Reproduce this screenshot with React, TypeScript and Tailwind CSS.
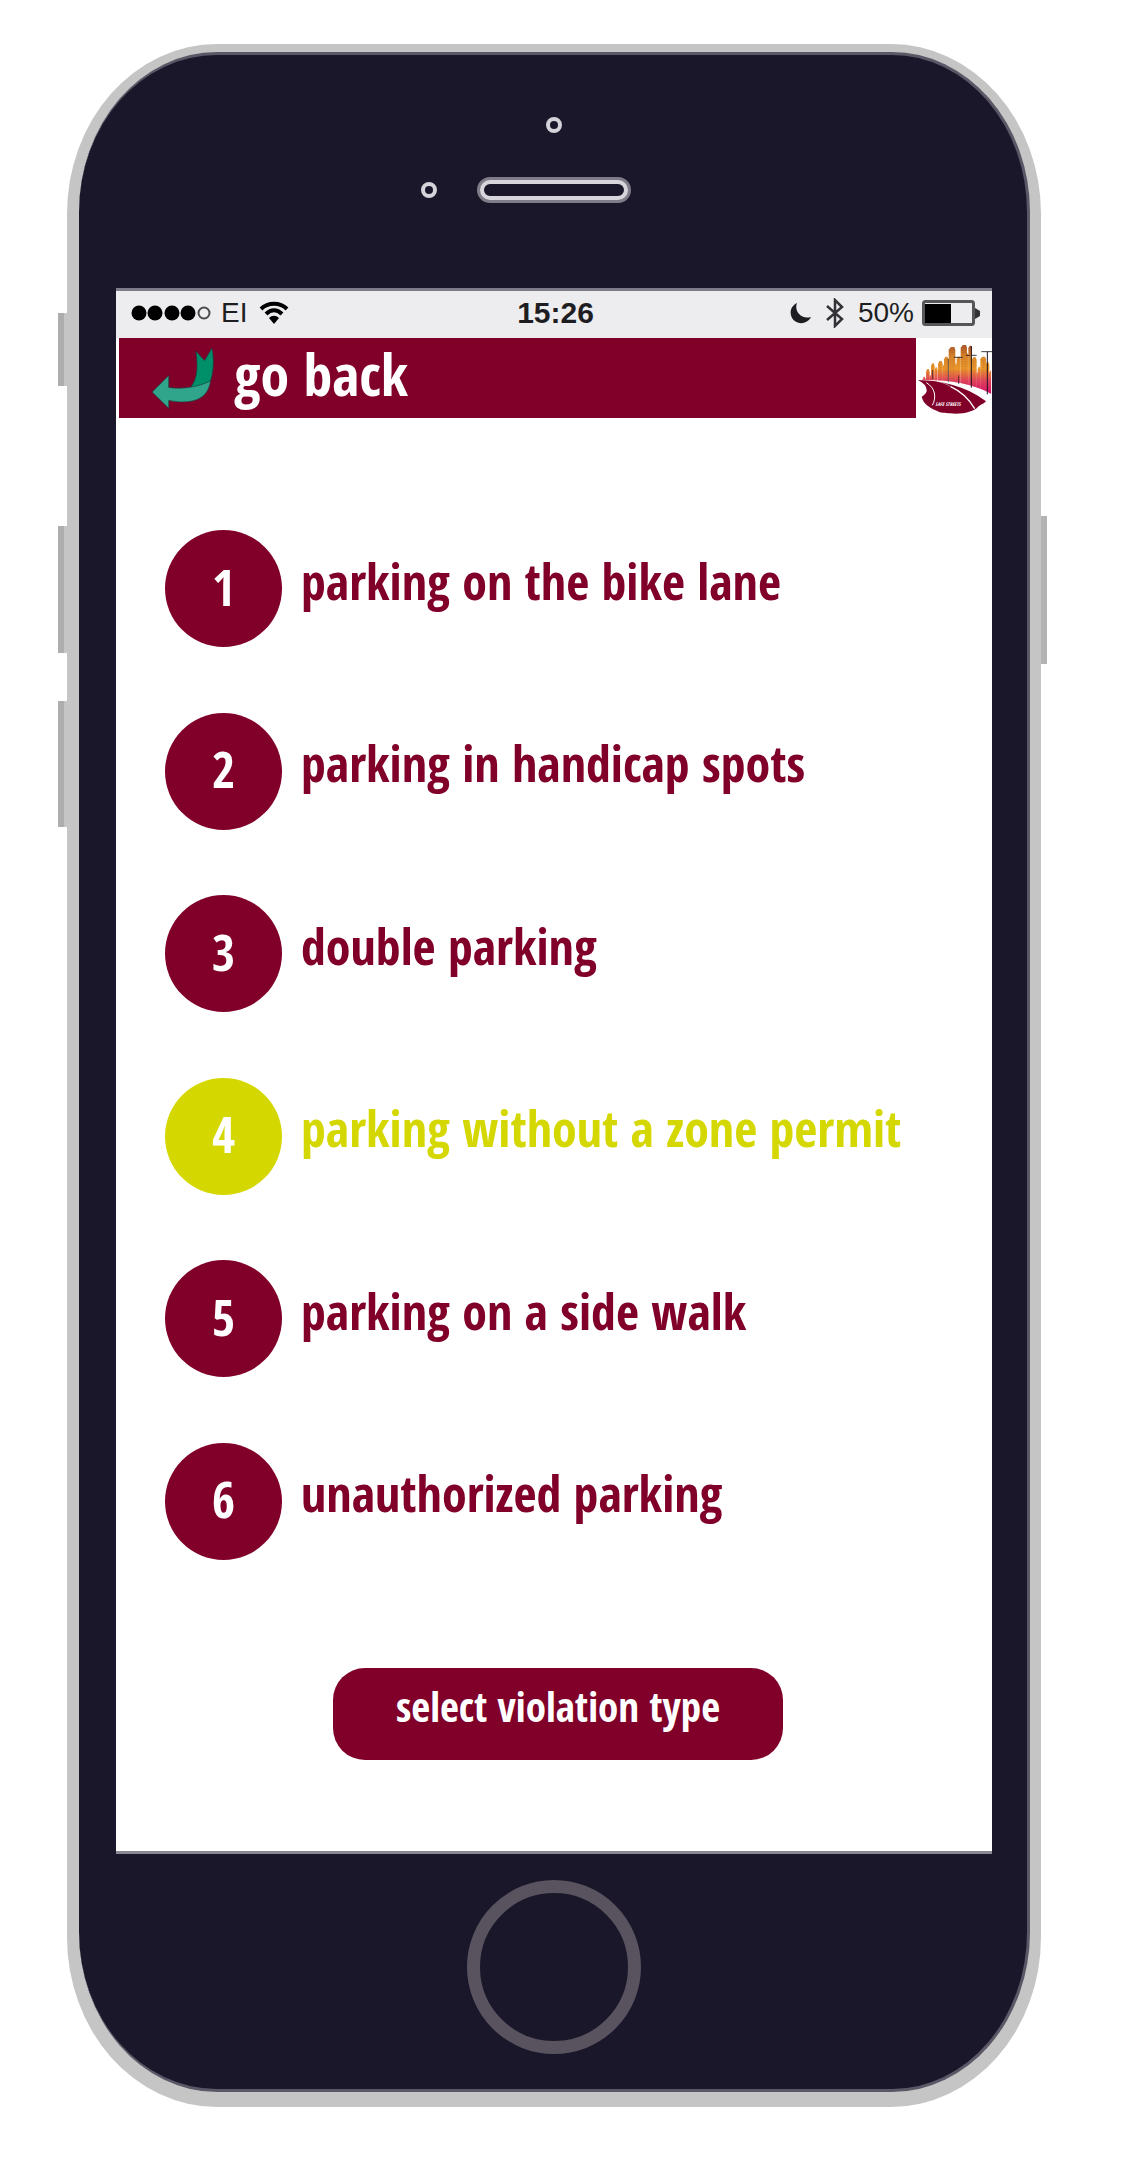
import { useState } from 'react';

const violations = [
  'parking on the bike lane',
  'parking in handicap spots',
  'double parking',
  'parking without a zone permit',
  'parking on a side walk',
  'unauthorized parking',
];

const buildings = [
  [68, 9, 140], [78, 11, 117], [88, 6, 134], [93, 11, 100], [104, 9, 112], [114, 14, 93], [127, 6, 104],
  [132, 13, 80], [146, 20, 51], [165, 6, 98], [170, 12, 80], [182, 19, 45], [200, 6, 70], [205, 11, 47],
  [215, 15, 82], [229, 5, 124], [233, 9, 110], [241, 17, 80], [257, 11, 96], [267, 10, 122],
];

function BackArrow() {
  return (
    <svg viewBox="125 200 195 190" className="h-[63px] w-[65px] shrink-0" aria-hidden="true">
      <g stroke="#16423f" strokeWidth="2" strokeLinejoin="round">
        <path fill="#009069" d="M260 213 L286 241 L308 204 C314 232 315 268 304 302 C286 314 266 320 243 323 C262 300 268 268 260 213Z" />
        <path fill="#30a58b" d="M128 336 L178 286 V322 C215 328 266 322 304 302 C300 332 284 351 262 359 C236 368 208 367 178 361 V385Z" />
      </g>
    </svg>
  );
}

function SafeStreetsLogo() {
  return (
    <svg viewBox="48 24 240 240" className="h-20 w-20 max-w-none" role="img" aria-label="Safe Streets">
      <defs>
        <linearGradient id="sky" gradientUnits="userSpaceOnUse" x1="0" y1="44" x2="0" y2="188">
          <stop offset="0" stopColor="#a8542a" />
          <stop offset="0.25" stopColor="#d9862c" />
          <stop offset="0.5" stopColor="#e9962a" />
          <stop offset="0.75" stopColor="#e0425c" />
          <stop offset="1" stopColor="#d81468" />
        </linearGradient>
        <clipPath id="skyline">
          <path d="M60 20 H274 V192 C220 160 140 148 60 150Z" />
        </clipPath>
      </defs>
      <g clipPath="url(#skyline)">
        {buildings.map(([x, w, y]) => (
          <path key={x} fill="url(#sky)" d={`M${x} 200 V${y + 8} L${x + w / 3} ${y} H${x + w - 3} L${x + w} ${y + 8} V200Z`} />
        ))}
        <g stroke="#a8572c" strokeWidth="1.5" strokeDasharray="3 4" opacity="0.8">
          <path d="M84 120V150M98 106V150M120 98V150M138 86V150M152 60V155M160 60V155M188 52V160M196 52V160M222 90V170M250 90V180" />
        </g>
      </g>
      <g stroke="#1d1320" fill="none">
        <path strokeWidth="2" d="M145 86V156M176 136V162M98 120V148" />
        <path strokeWidth="3" d="M214 48V173M262 65V193" />
        <path strokeWidth="2.5" d="M244 65H286M162 82H188M198 76H210M216 76H230" />
      </g>
      <path fill="#800029" d="M54 150 C124 152 194 166 258 214 C250 222 246 222 236 229 C222 248 178 254 150 250 C136 248 122 250 110 242 C90 234 70 222 65 200 C72 196 80 188 80 182 C80 166 70 160 54 150Z" />
      <path fill="none" stroke="#fff" strokeWidth="3" d="M79 158 C106 174 110 202 97 226" />
      <path fill="none" stroke="#fff" strokeWidth="1.5" d="M112 154 C130 158 140 162 152 170" />
      <path fill="none" stroke="#fff" strokeWidth="4" d="M152 170 C182 184 208 208 224 236" />
      <text x="106" y="228" fontSize="15" fontWeight="700" fontStyle="italic" fill="#fff" fontFamily="Open Sans Condensed, Open Sans, sans-serif">SAFE STREETS</text>
    </svg>
  );
}

function StatusBar() {
  return (
    <div className="grid h-[50px] grid-cols-[1fr_auto_1fr] items-center border-t-3 border-[#7f7b8b] bg-[#ededf0] pr-3 pb-[3px] pl-[15px] font-['Liberation_Sans',sans-serif] text-[28px] leading-8 font-normal text-[#1e1e22]">
      <div className="flex items-center">
        <svg viewBox="0 0 82 18" className="mr-2 h-[18px] w-[82px]" aria-hidden="true">
          {[8, 24, 41, 57].map((x) => <circle key={x} cx={x} cy="9" r="7.5" fill="#000" />)}
          <circle cx="73" cy="9" r="5.5" fill="none" stroke="#4a4a4e" strokeWidth="2" />
        </svg>
        <span>EI</span>
        <svg viewBox="0 0 30 24" className="ml-3 h-6 w-[30px]" fill="none" stroke="#000" aria-label="Wi-Fi" role="img">
          <path strokeWidth="4" d="M2 8C9 1 21 1 28 8" />
          <path strokeWidth="4" d="M7 13C12 8 18 8 23 13" />
          <path fill="#000" stroke="none" d="M10 17C13 14 17 14 20 17L15 23Z" />
        </svg>
      </div>
      <time className="text-[30px] font-bold">15:26</time>
      <div className="flex items-center justify-end">
        <svg viewBox="0 0 22 22" className="mr-3.5 h-[22px] w-[22px]" role="img" aria-label="Do not disturb">
          <path fill="#1e1e22" d="M7 1C4 8 10 18 21 15C17 23 6 23 2 16C-1 10 1 4 7 1Z" />
        </svg>
        <svg viewBox="0 0 18 30" className="mr-3.5 h-[30px] w-[18px]" role="img" aria-label="Bluetooth">
          <path fill="none" stroke="#333337" strokeWidth="2.5" d="M1 8L16 21L9 28V2L16 9L1 22" />
        </svg>
        <span>50%</span>
        <svg viewBox="0 0 58 26" className="ml-2 h-[26px] w-[58px]" role="img" aria-label="Battery half full">
          <rect x="1.5" y="1.5" width="50" height="23" rx="2" fill="none" stroke="#55555a" strokeWidth="3" />
          <rect x="3" y="4" width="26" height="19" fill="#000" />
          <path fill="#333337" d="M53 8L58 11V16L53 19Z" />
        </svg>
      </div>
    </div>
  );
}

export default function App() {
  const [selected, setSelected] = useState(3);

  return (
    <main className="min-h-screen bg-white pt-11 pr-[82px] pb-[55px] pl-[67px] font-['Open_Sans_Condensed','Open_Sans',sans-serif] font-semibold">
      <div className="relative rounded-[150px/170px] border-t-8 border-r-11 border-b-15 border-l-12 border-[#c5c5c5] bg-[#c5c5c5]">
        <span className="absolute top-[261px] -left-[21px] h-[73px] w-[9px] border-l-6 border-[#adadad] bg-[#c5c5c5]" />
        <span className="absolute top-[474px] -left-[21px] h-[127px] w-[9px] border-l-6 border-[#adadad] bg-[#c5c5c5]" />
        <span className="absolute top-[649px] -left-[21px] h-[126px] w-[9px] border-l-6 border-[#adadad] bg-[#c5c5c5]" />
        <span className="absolute top-[464px] -right-[17px] h-[148px] w-[9px] border-r-6 border-[#b3b3b3] bg-[#c5c5c5]" />

        <div className="rounded-[138px/160px] border-t-3 border-r-3 border-b-3 border-[#5b5766] bg-[#1b172a] pr-[35px] pl-[37px]">
          <div className="flex h-[233px] flex-col items-center pt-[62px]">
            <span className="h-4 w-4 rounded-full border-4 border-[#d5d3da]" />
            <div className="mt-11 flex w-full items-center justify-center gap-10">
              <span className="h-4 w-4 rounded-full border-4 border-[#d5d3da]" />
              <span className="h-[26px] w-[154px] rounded-full border-3 border-[#7f7b88] bg-[#d8d6dc] p-px">
                <span className="block h-full w-full rounded-full border-3 border-[#d8d6dc] bg-[#1b172a]" />
              </span>
              <span className="w-4" />
            </div>
          </div>

          <div className="border-b-3 border-[#8b8894] bg-white">
            <StatusBar />
            <header className="flex h-20 pl-[3px]">
              <div className="flex flex-1 items-center bg-[#800029] pl-8">
                <button type="button" className="flex items-center gap-[18px] text-[58px] leading-[60px] text-white">
                  <BackArrow />
                  <span className="pb-2">go back</span>
                </button>
              </div>
              <div className="w-[76px] shrink-0">
                <SafeStreetsLogo />
              </div>
            </header>

            <form className="flex flex-col pt-28 pb-[91px]" onSubmit={(e) => e.preventDefault()}>
              <fieldset aria-label="violation type" className="pl-[49px]">
                <div className="flex min-h-[1030px] flex-col justify-between">
                  {violations.map((label, i) => {
                    const active = i === selected;
                    return (
                      <label
                        key={label}
                        className={`relative flex cursor-pointer items-center gap-[19px] text-[50px] leading-[60px] ${active ? 'text-[#d5d800]' : 'text-[#800029]'}`}
                      >
                        <input type="radio" name="violation" className="sr-only" checked={active} onChange={() => setSelected(i)} />
                        <span className={`flex size-[117px] shrink-0 items-center justify-center rounded-full ${active ? 'bg-[#d5d800]' : 'bg-[#800029]'}`}>
                          <span className="pb-1 text-white">{i + 1}</span>
                        </span>
                        <span className="pb-4">{label}</span>
                      </label>
                    );
                  })}
                </div>
              </fieldset>
              <button type="submit" className="mt-27 ml-2 h-[92px] w-[450px] self-center rounded-4xl bg-[#800029] pb-4 text-[41px] leading-[50px] text-white">
                select violation type
              </button>
            </form>
          </div>

          <div className="flex h-[235px] justify-center pt-[26px]">
            <button type="button" aria-label="Home" className="size-[174px] rounded-full border-13 border-[#59535f]" />
          </div>
        </div>
      </div>
    </main>
  );
}
